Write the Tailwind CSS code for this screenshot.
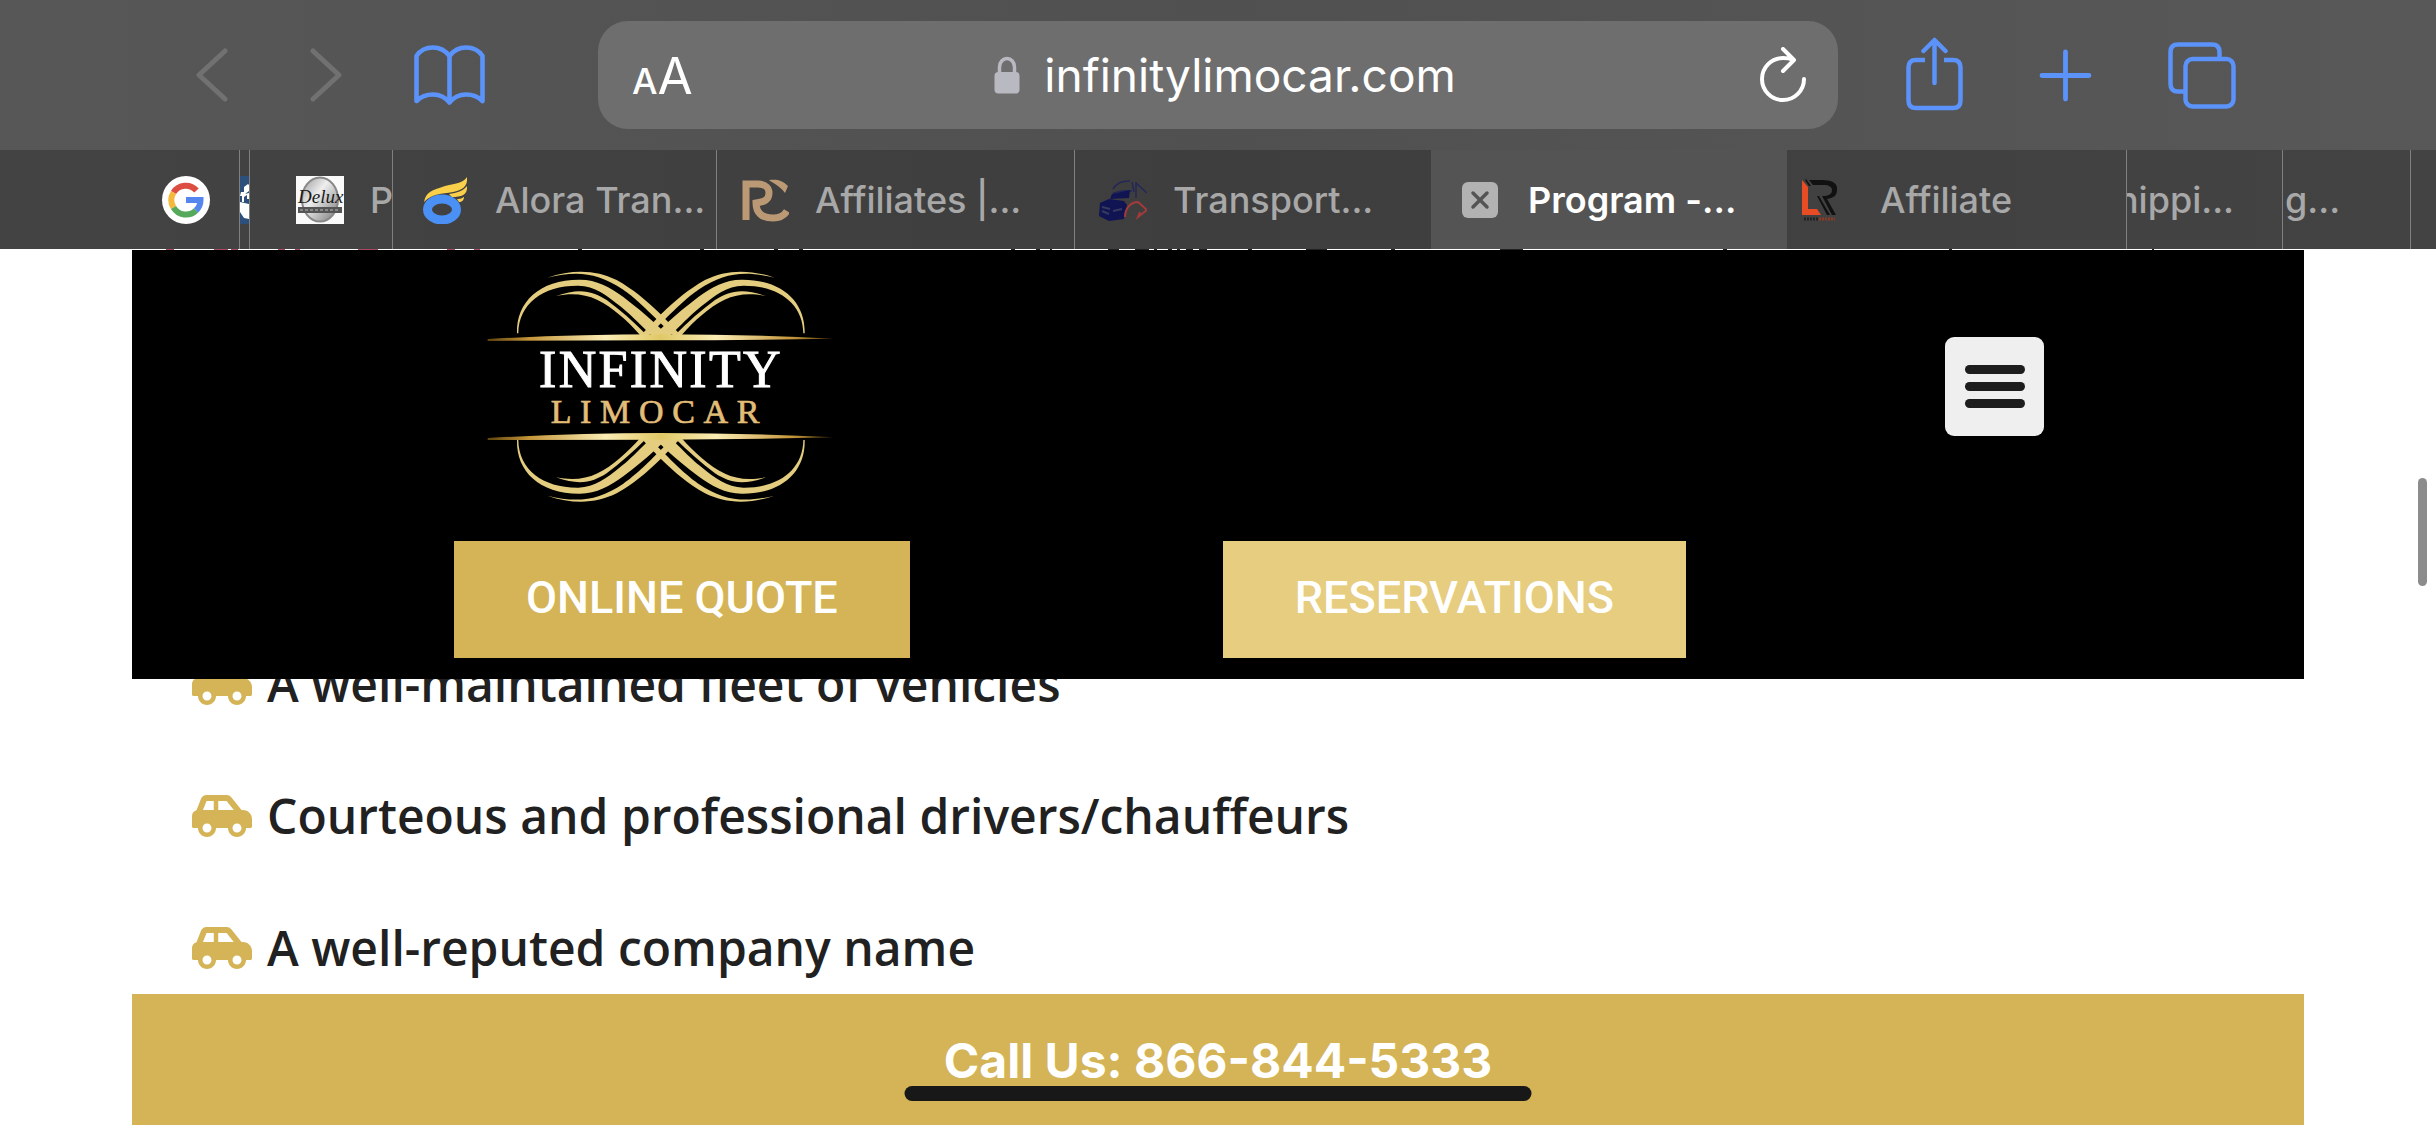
<!DOCTYPE html>
<html lang="en">

<head>
    <meta charset="UTF-8" />
    <meta name="viewport" content="width=device-width, initial-scale=1.0" />
    <title>Program - Infinity Limocar</title>
    <script src="https://cdn.jsdelivr.net/npm/@tailwindcss/browser@4"></script>
</head>

<body class="bg-white min-h-screen overflow-hidden font-['Inter',sans-serif]">
    <!-- Browser toolbar -->
    <div class="flex items-center h-[150px] bg-linear-to-r from-[#575757] via-[#505050] to-[#585858]">
        <div class="w-[598px] flex items-center gap-[72px] pl-[196px] text-[#717171]">
            <button aria-label="Back">
                <svg class="w-10 h-[54px]" viewBox="0 0 40 54" fill="none" stroke="currentColor" stroke-width="5" stroke-linecap="round" stroke-linejoin="round">
                    <path d="M29 3L3 27l26 24" />
                </svg>
            </button>
            <button aria-label="Forward">
                <svg class="w-[34px] h-[54px]" viewBox="0 0 34 54" fill="none" stroke="currentColor" stroke-width="5" stroke-linecap="round" stroke-linejoin="round">
                    <path d="M5 3l26 24L5 51" />
                </svg>
            </button>
            <button aria-label="Bookmarks" class="text-[#5b93fa]">
                <svg class="w-[71px] h-[60px]" viewBox="0 0 71 60" fill="none" stroke="currentColor" stroke-width="4.6" stroke-linecap="round" stroke-linejoin="round">
                    <path d="M35.500 11C31 5 25.500 2.500 19 2.500S6 5.500 2.500 11V56C6.500 52 12.500 49.500 19 49.500S31 52 35.500 57.500C40 52 46 49.500 52 49.500S64.500 52 68.500 56V11C65 5.500 58.500 2.500 52 2.500S40 5 35.500 11V57" />
                </svg>
            </button>
        </div>

        <div class="flex-1 flex items-center justify-between h-[108px] rounded-[30px] bg-[#6e6e6e] pl-[34px] pr-8 text-white">
            <button aria-label="Page settings" class="flex items-baseline leading-none">
                <span class="text-[36px] font-medium">A</span><span class="text-[51px]">A</span>
            </button>
            <div class="flex items-center gap-6">
                <svg class="w-[26px] h-[38px] text-[#b9b9c1]" viewBox="0 0 26 38">
                    <path d="M5.500 18V11a7.500 8.500 0 0 1 15 0v7" fill="none" stroke="currentColor" stroke-width="3.500" />
                    <rect x="0.500" y="16" width="25" height="21.500" rx="4" fill="currentColor" />
                </svg>
                <input type="text" aria-label="Address" value="infinitylimocar.com"
                    class="w-[414px] h-[70px] text-[46px] bg-transparent focus:outline-none" />
            </div>
            <button aria-label="Reload">
                <svg class="w-[46px] h-14" viewBox="0 0 46 56" fill="none" stroke="currentColor" stroke-width="4" stroke-linecap="round" stroke-linejoin="round">
                    <path d="M44 32a21 21 0 1 1-21-21c4 0 7 .5 10 1.500M23 2l11 11-11 11" />
                </svg>
            </button>
        </div>

        <div class="w-[598px] flex items-center gap-[76px] pl-[68px] text-[#5b93fa]">
            <button aria-label="Share">
                <svg class="w-[57px] h-[76px]" viewBox="0 0 57 76" fill="none" stroke="currentColor" stroke-width="4.500" stroke-linecap="round" stroke-linejoin="round">
                    <path d="M28.500 46V4M17.500 14l11-11 11 11" />
                    <path d="M19 23H10q-7.500 0-7.500 7.500v33q0 7.500 7.500 7.500h37q7.500 0 7.500-7.500v-33q0-7.500-7.500-7.500h-9" stroke-linecap="butt" />
                </svg>
            </button>
            <button aria-label="New tab">
                <svg class="w-[53px] h-[53px]" viewBox="0 0 53 53" stroke="currentColor" stroke-width="4.800" stroke-linecap="round">
                    <path d="M26.500 3v47M3 26.500h47" />
                </svg>
            </button>
            <button aria-label="Tabs">
                <svg class="w-[68px] h-[67px]" viewBox="0 0 68 67" fill="none" stroke="currentColor" stroke-width="4.500">
                    <path d="M17.500 49.500H10q-7.500 0-7.500-7.500V10q0-7.500 7.500-7.500h34q7.500 0 7.500 7.500v7" />
                    <rect x="17.500" y="17" width="48" height="47.500" rx="7" />
                </svg>
            </button>
        </div>
    </div>

    <!-- Browser tabs -->
    <nav class="flex h-[99px] bg-linear-to-r from-[#434343] via-[#3e3e3e] to-[#434343] text-[#a8a8a8] text-[36px] font-medium whitespace-nowrap">
        <a href="#" aria-label="Google" class="w-[240px] shrink-0 flex items-center justify-end pr-[29px] border-r border-[#808080]">
            <svg class="w-12 h-12" viewBox="0 0 48 48" fill="none" stroke-width="6">
                <circle cx="24" cy="24" r="24" fill="#fff" />
                <path d="M34.500 14.500A14.500 14.500 0 0 0 11.500 16.500" stroke="#dc4e41" />
                <path d="M11.500 16.500a14.500 14.500 0 0 0 0 15" stroke="#f4b93c" />
                <path d="M11.500 31.500a14.500 14.500 0 0 0 22.500 3" stroke="#56a95b" />
                <path d="M24 24h14.500a14.500 14.500 0 0 1-4.500 10.500" stroke="#5585ee" />
            </svg>
        </a>
        <a href="#" aria-label="Tab" class="w-[10px] shrink-0 flex items-center overflow-hidden border-r border-[#808080]">
            <svg class="w-[9px] h-12 shrink-0" viewBox="0 0 9 48">
                <path d="M0 0h9v48H0z" fill="#2c4f7c" />
                <path d="M1 16h3v-5l4-3 1 1v6l-4 3 4-1v6H7v-4l-3 2v5H2v-6H0zM0 26l9 2v15l-5-1-4-6z" fill="#fff" />
            </svg>
        </a>
        <a href="#" class="w-[143px] shrink-0 flex items-center gap-[26px] pl-[46px] overflow-hidden border-r border-[#808080]">
            <svg class="w-12 h-12 shrink-0" viewBox="0 0 48 48">
                <defs>
                    <linearGradient id="steel" x1="0" y1="0" x2="1" y2="1">
                        <stop offset="0" stop-color="#999" />
                        <stop offset=".4" stop-color="#eee" />
                        <stop offset="1" stop-color="#777" />
                    </linearGradient>
                </defs>
                <path d="M0 0h48v48H0z" fill="#fafafa" />
                <ellipse cx="24" cy="23.500" rx="18" ry="22" fill="url(#steel)" stroke="#888" stroke-width="2" />
                <path d="M2 31h44v6H2z" fill="#555" />
                <path d="M4 34h40" stroke="#bbb" stroke-dasharray="3 2" />
                <text x="2" y="27" font-family="Liberation Serif" font-style="italic" font-size="19" fill="#1b1b1b">Delux</text>
            </svg>
            <span>P</span>
        </a>
        <a href="#" class="w-[324px] shrink-0 flex items-center gap-[26px] pl-7 overflow-hidden border-r border-[#808080]">
            <svg class="w-12 h-12 shrink-0" viewBox="0 0 48 48">
                <ellipse cx="21" cy="33.500" rx="14.500" ry="10.500" fill="none" stroke="#4a90f5" stroke-width="9" />
                <path d="M3 26C5 15 12 14 24 10 36 7 42 7 46 1c1 10-5 13-14 15C20 18 12 17 3 26z" fill="#fad04a" />
                <path d="M28 18c8-1 14-3 18-8 1 9-6 11-15 11zM36 23c4 0 5-1 7-2 0 3-2 5-5 5z" fill="#fad04a" />
            </svg>
            <span>Alora Tran...</span>
        </a>
        <a href="#" class="w-[358px] shrink-0 flex items-center gap-[26px] pl-6 overflow-hidden border-r border-[#808080]">
            <svg class="w-12 h-12 shrink-0" viewBox="0 0 48 48" fill="none" stroke="#bb9974" stroke-width="7">
                <path d="M5 44V8h12c8 0 11 5 11 9 0 7-5 9-13 10 0 10 6 15 17 15 7 0 11-2 14-7" />
                <path d="M28 4c8-1 13 0 19 6l-3 7C38 9 33 8 28 4z" fill="#bb9974" stroke="none" />
            </svg>
            <span>Affiliates |...</span>
        </a>
        <a href="#" class="w-[356px] shrink-0 flex items-center gap-[26px] pl-6 overflow-hidden">
            <svg class="w-12 h-12 shrink-0" viewBox="0 0 48 48">
                <path d="M14 13c4-6 8-8 17-8M14 17c7-2 12-3 19-2M33 6l2 10M37 7l11 10M37 6v16" fill="none" stroke="#242758" stroke-width="1.500" />
                <path d="M13 18l18-4-1 8-19 1zM1 27l9-4 15 2 3 4-3 14-15 2-10-5z" fill="#101453" />
                <path d="M3 31l8 2M3 35l7 3M14 35l9-2" stroke="#363a5c" stroke-width="2" />
                <path d="M26 41c0-9 6-15 13-15l9 8-9 7 2-5" fill="none" stroke="#a33b3b" stroke-width="2" />
            </svg>
            <span>Transport...</span>
        </a>
        <a href="#" aria-current="page" class="w-[356px] shrink-0 flex items-center gap-[30px] pl-[31px] overflow-hidden bg-[#545454] text-white font-semibold">
            <svg class="w-9 h-9 shrink-0" viewBox="0 0 36 36">
                <rect width="36" height="36" rx="6" fill="#b2b2b2" />
                <path d="M11 11l14 14M25 11L11 25" stroke="#545454" stroke-width="3.500" stroke-linecap="round" />
            </svg>
            <span>Program -...</span>
        </a>
        <a href="#" class="w-[340px] shrink-0 flex items-center gap-[37px] pl-2 overflow-hidden border-r border-[#808080]">
            <svg class="w-12 h-12 shrink-0" viewBox="0 0 48 48">
                <path d="M7 4l6 7v22h9l4 6H7z" fill="#e84c24" />
                <path d="M14 4h13c11 0 16 4 15 10 0 6-4 8-10 9l9 16h-4l-10-19c7 0 10-2 10-6 0-3-3-5-8-5H18zM11 3l5 7h-2L10 4zM24 20l11 19h-3L22 20z" fill="#111" />
                <path d="M9 43h14" stroke="#222" stroke-width="3" stroke-dasharray="2 1" />
                <path d="M24 43h16" stroke="#8d3a25" stroke-width="3" stroke-dasharray="2 1" />
            </svg>
            <span>Affiliate</span>
        </a>
        <a href="#" class="w-[156px] shrink-0 flex items-center justify-end pr-12 overflow-hidden border-r border-[#808080]">
            <span>hippi...</span>
        </a>
        <a href="#" class="w-[128px] shrink-0 flex items-center pl-[2px] overflow-hidden border-r border-[#808080]">
            <span>g...</span>
        </a>
    </nav>

    <!-- Sliver of the scrolled page showing above the sticky header -->
    <svg class="block w-full h-px" viewBox="0 0 2436 1" preserveAspectRatio="none">
        <path d="M166 0h8v1h-8zM214 0h14v1h-14zM231 0h7v1h-7zM278 0h7v1h-7zM295 0h5v1h-5zM358 0h20v1h-20zM447 0h8v1h-8zM474 0h6v1h-6z" fill="#a84a62" />
        <path d="M578 0h4v1h-4zM700 0h4v1h-4zM774 0h4v1h-4zM799 0h4v1h-4zM1011 0h4v1h-4zM1036 0h4v1h-4zM1050 0h2v1h-2zM1108 0h11v1h-11zM1135 0h14v1h-14zM1154 0h3v1h-3zM1168 0h4v1h-4zM1177 0h3v1h-3zM1186 0h7v1h-7zM1199 0h8v1h-8zM1248 0h4v1h-4zM1306 0h21v1h-21zM1391 0h4v1h-4zM1500 0h23v1h-23zM1723 0h4v1h-4zM1949 0h3v1h-3zM2152 0h2v1h-2z" fill="#222" />
    </svg>

    <div class="mx-[132px]">
        <header class="relative z-10 bg-black pb-[21px]">
            <div class="flex items-center justify-between pl-[308px] pr-[260px]">
                <a href="#" aria-label="Infinity Limocar">
                    <svg class="w-[440px] h-[270px]" viewBox="0 0 1320 810">
                        <defs>
                            <linearGradient id="bar" x1="0" x2="1">
                                <stop offset="0" stop-color="#5f430b" />
                                <stop offset=".12" stop-color="#c4953a" />
                                <stop offset=".34" stop-color="#fbedb4" />
                                <stop offset=".5" stop-color="#e0c866" />
                                <stop offset=".66" stop-color="#fbedb4" />
                                <stop offset=".88" stop-color="#c4953a" />
                                <stop offset="1" stop-color="#4a3408" />
                            </linearGradient>
                            <g id="swirl" fill="#e4cd7e">
                                <path d="M322 83C400 56 470 60 530 90C580 118 620 152 662 193L722 255H698L650 208C600 157 575 137 550 119C470 66 410 62 322 83z" />
                                <path d="M231 250C228 155 300 88 420 89C470 89 510 112 550 141C585 168 616 193 643 218L690 262H640L600 223C575 198 560 184 540 168C500 136 465 108 415 107C310 106 236 160 235 250z" />
                                <path d="M348 138C420 112 460 124 500 150C540 179 580 215 620 255H600C580 233 560 212 540 196C480 145 430 122 348 138z" />
                            </g>
                            <g id="crest">
                                <use href="#swirl" />
                                <use href="#swirl" transform="translate(1325 0) scale(-1 1)" />
                            </g>
                        </defs>
                        <use href="#crest" />
                        <use href="#crest" transform="translate(0 820) scale(1 -1)" />
                        <path d="M143 267Q400 253 662 253T1182 266Q920 271 662 271T143 273z" fill="url(#bar)" />
                        <path d="M143 564Q400 549 662 549T1182 562Q920 569 662 569T143 570z" fill="url(#bar)" />
                        <text x="297" y="412" font-family="Liberation Serif" font-size="156" letter-spacing="7" fill="#fff" stroke="#fff" stroke-width="3">INFINITY</text>
                        <text x="332" y="518" font-family="Liberation Serif" font-size="102" letter-spacing="26" fill="#e2bd78" stroke="#e2bd78" stroke-width="2">LIMOCAR</text>
                    </svg>
                </a>
                <button aria-label="Menu" class="flex flex-col items-center justify-center gap-2 w-[99px] h-[99px] mt-[2px] rounded-[9px] bg-[#efefef]">
                    <span class="w-[60px] h-[9px] rounded-full bg-[#1d1d1d]"></span>
                    <span class="w-[60px] h-[9px] rounded-full bg-[#1d1d1d]"></span>
                    <span class="w-[60px] h-[9px] rounded-full bg-[#1d1d1d]"></span>
                </button>
            </div>
            <div class="flex gap-[313px] pl-[322px] pt-[21px] text-white text-[45px] leading-[45px] font-medium font-['Roboto',sans-serif]">
                <a href="#" class="bg-[#d4b456] px-[72px] pt-[34px] pb-[38px]">ONLINE QUOTE</a>
                <a href="#" class="bg-[#e6cd7f] px-[72px] pt-[34px] pb-[38px]">RESERVATIONS</a>
            </div>
        </header>

        <ul class="-mt-[61px] pl-[60px] text-[#212121] text-[48px] leading-[68px] font-semibold font-['Open_Sans',sans-serif]">
            <li class="flex items-center gap-[15px] py-8">
                <svg class="w-[60px] h-12 text-[#d4b456]" viewBox="0 0 640 512" fill="currentColor">
                    <path id="car" d="M544 192h-16L419.220 56.020A64.025 64.025 0 0 0 369.240 32H155.330c-26.170 0-49.700 15.930-59.420 40.230L48 194.260C20.440 201.400 0 226.210 0 256v112c0 8.840 7.160 16 16 16h48c0 53.020 42.980 96 96 96s96-42.980 96-96h128c0 53.020 42.980 96 96 96s96-42.980 96-96h48c8.840 0 16-7.160 16-16v-80c0-53.020-42.980-96-96-96zM160 432c-26.470 0-48-21.530-48-48s21.530-48 48-48 48 21.530 48 48-21.530 48-48 48zm72-240H116.930l38.400-96H232v96zm48 0V96h89.240l76.800 96H280zm200 240c-26.470 0-48-21.530-48-48s21.530-48 48-48 48 21.530 48 48-21.530 48-48 48z" />
                </svg>
                <span>A well-maintained fleet of vehicles</span>
            </li>
            <li class="flex items-center gap-[15px] py-8">
                <svg class="w-[60px] h-12 text-[#d4b456]" viewBox="0 0 640 512" fill="currentColor"><use href="#car" /></svg>
                <span>Courteous and professional drivers/chauffeurs</span>
            </li>
            <li class="flex items-center gap-[15px] py-8">
                <svg class="w-[60px] h-12 text-[#d4b456]" viewBox="0 0 640 512" fill="currentColor"><use href="#car" /></svg>
                <span>A well-reputed company name</span>
            </li>
        </ul>
    </div>

    <!-- Call bar pinned to the bottom -->
    <a href="tel:8668445333" class="fixed bottom-0 inset-x-[132px] z-10 h-[131px] pt-[35px] bg-[#d4b456] text-white text-center text-[48px] leading-[64px] font-bold">Call Us: 866-844-5333</a>
    <div class="fixed bottom-6 left-1/2 -translate-x-1/2 z-20 w-[627px] h-[15px] rounded-full bg-[#181818]"></div>

    <!-- Scroll thumb -->
    <div class="fixed right-[9px] top-[478px] w-[9px] h-[108px] rounded-full bg-[#8c8c8c]"></div>
</body>

</html>
